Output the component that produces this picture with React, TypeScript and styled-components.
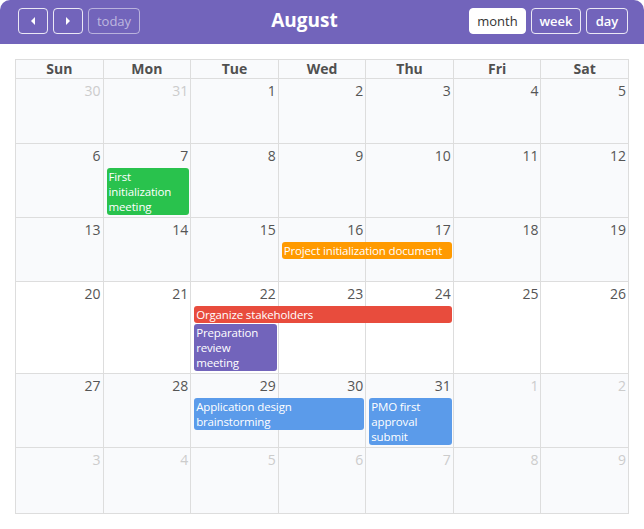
import { createGlobalStyle } from "styled-components";
import styled from "styled-components";

const GlobalStyle = createGlobalStyle`
  body {
    margin: 0;
    background: #fff;
    font-family: "Open Sans", "Noto Sans", sans-serif;
  }
`;

const PURPLE = "#7264bb";

type CalEvent = {
  title: string;
  start: number;
  span: number;
  row: number;
  color: string;
};

type Day = { num: number; other?: boolean };

type Week = {
  days: Day[];
  height: number;
  white?: boolean;
  events: CalEvent[];
};

const dayNames = ["Sun", "Mon", "Tue", "Wed", "Thu", "Fri", "Sat"];

const range = (from: number, to: number, other = false): Day[] =>
  Array.from({ length: to - from + 1 }, (_, i) => ({ num: from + i, other }));

const weeks: Week[] = [
  { days: [...range(30, 31, true), ...range(1, 5)], height: 65, events: [] },
  {
    days: range(6, 12),
    height: 74,
    events: [
      { title: "First initialization meeting", start: 2, span: 1, row: 0, color: "#29c24d" },
    ],
  },
  {
    days: range(13, 19),
    height: 64,
    events: [
      { title: "Project initialization document", start: 4, span: 2, row: 0, color: "#ff9a00" },
    ],
  },
  {
    days: range(20, 26),
    height: 92,
    white: true,
    events: [
      { title: "Organize stakeholders", start: 3, span: 3, row: 0, color: "#e84c3d" },
      { title: "Preparation review meeting", start: 3, span: 1, row: 1, color: PURPLE },
    ],
  },
  {
    days: [...range(27, 31), ...range(1, 2, true)],
    height: 74,
    events: [
      { title: "Application design brainstorming", start: 3, span: 2, row: 0, color: "#5b9bea" },
      { title: "PMO first approval submit", start: 5, span: 1, row: 0, color: "#5b9bea" },
    ],
  },
  { days: range(3, 9, true), height: 66, events: [] },
];

const Toolbar = styled.header`
  display: flex;
  align-items: center;
  justify-content: space-between;
  height: 44px;
  padding: 0 16px 0 18px;
  background: ${PURPLE};
  border-radius: 10px 10px 0 0;
`;

const ButtonGroup = styled.div`
  display: flex;
  gap: 5px;
  margin-top: -2px;
`;

const ToolButton = styled.button<{ $active?: boolean; $disabled?: boolean; $w: number }>`
  display: flex;
  align-items: center;
  justify-content: center;
  width: ${(p) => p.$w}px;
  height: 26px;
  padding: 0;
  border-radius: 4px;
  font-family: inherit;
  font-size: 13px;
  font-weight: ${(p) => (p.$active || p.$disabled ? 400 : 600)};
  background: ${(p) => (p.$active ? "#fff" : "transparent")};
  color: ${(p) => (p.$active ? "#333" : p.$disabled ? "rgba(255,255,255,0.55)" : "#fff")};
  border: 1px solid
    ${(p) => (p.$active ? "#fff" : p.$disabled ? "rgba(255,255,255,0.5)" : "rgba(255,255,255,0.85)")};
  cursor: pointer;
`;

const Title = styled.h2`
  margin: 0 0 4px;
  color: #fff;
  font-size: 19px;
  font-weight: 700;
`;

const Body = styled.main`
  padding: 15px;
`;

const Grid = styled.div`
  border-left: 1px solid #ddd;
  border-top: 1px solid #ddd;
`;

const HeadRow = styled.div`
  display: grid;
  grid-template-columns: repeat(7, 1fr);
`;

const HeadCell = styled.div`
  height: 19px;
  line-height: 18px;
  box-sizing: border-box;
  border-right: 1px solid #ddd;
  border-bottom: 1px solid #ddd;
  background: #f9fafc;
  text-align: center;
  font-size: 14px;
  font-weight: 700;
  color: #505050;
`;

const WeekRow = styled.div<{ $h: number }>`
  display: grid;
  grid-template-columns: repeat(7, 1fr);
  grid-template-rows: 24px repeat(2, auto) 1fr;
  height: ${(p) => p.$h}px;
`;

const DayCell = styled.div<{ $col: number; $white?: boolean }>`
  grid-column: ${(p) => p.$col};
  grid-row: 1 / -1;
  border-right: 1px solid #ddd;
  border-bottom: 1px solid #ddd;
  background: ${(p) => (p.$white ? "#fff" : "#f9fafc")};
`;

const DayNumber = styled.div<{ $col: number; $other?: boolean }>`
  grid-column: ${(p) => p.$col};
  grid-row: 1;
  padding: 2px 3px 0 0;
  text-align: right;
  font-size: 14px;
  line-height: 20px;
  color: ${(p) => (p.$other ? "#ccc" : "#555")};
  z-index: 1;
`;

const EventBar = styled.div<{ $start: number; $span: number; $row: number; $color: string }>`
  grid-column: ${(p) => p.$start} / span ${(p) => p.$span};
  grid-row: ${(p) => p.$row + 2};
  align-self: start;
  margin: 0 2px 1px 3px;
  padding: 1px 2px;
  border-radius: 3px;
  background: ${(p) => p.$color};
  color: #fff;
  font-size: 11.5px;
  letter-spacing: -0.15px;
  line-height: 15px;
  z-index: 1;
`;

const ArrowIcon = ({ dir }: { dir: "left" | "right" }) => (
  <svg width="6" height="8" viewBox="0 0 6 8">
    <path d={dir === "left" ? "M5 0 L1 4 L5 8 Z" : "M1 0 L5 4 L1 8 Z"} fill="#fff" />
  </svg>
);

export default function App() {
  return (
    <>
      <GlobalStyle />
      <Toolbar>
        <ButtonGroup>
          <ToolButton $w={30}>
            <ArrowIcon dir="left" />
          </ToolButton>
          <ToolButton $w={30}>
            <ArrowIcon dir="right" />
          </ToolButton>
          <ToolButton $w={52} $disabled>
            today
          </ToolButton>
        </ButtonGroup>
        <Title>August</Title>
        <ButtonGroup>
          <ToolButton $w={57} $active>
            month
          </ToolButton>
          <ToolButton $w={50}>week</ToolButton>
          <ToolButton $w={42}>day</ToolButton>
        </ButtonGroup>
      </Toolbar>
      <Body>
        <Grid>
          <HeadRow>
            {dayNames.map((d) => (
              <HeadCell key={d}>{d}</HeadCell>
            ))}
          </HeadRow>
          {weeks.map((w, wi) => (
            <WeekRow key={wi} $h={w.height}>
              {w.days.map((d, i) => (
                <DayCell key={"c" + i} $col={i + 1} $white={w.white} />
              ))}
              {w.days.map((d, i) => (
                <DayNumber key={"n" + i} $col={i + 1} $other={d.other}>
                  {d.num}
                </DayNumber>
              ))}
              {w.events.map((e) => (
                <EventBar key={e.title} $start={e.start} $span={e.span} $row={e.row} $color={e.color}>
                  {e.title}
                </EventBar>
              ))}
            </WeekRow>
          ))}
        </Grid>
      </Body>
    </>
  );
}
